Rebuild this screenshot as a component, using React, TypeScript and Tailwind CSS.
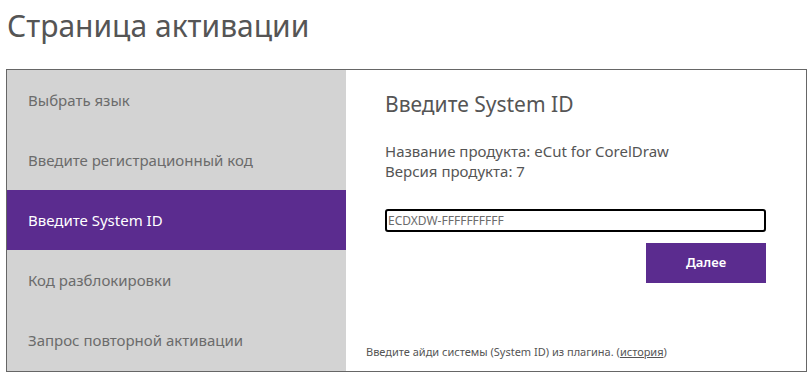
import React from "react";

const items = [
  "Выбрать язык",
  "Введите регистрационный код",
  "Введите System ID",
  "Код разблокировки",
  "Запрос повторной активации",
];

export default function App() {
  return (
    <div
      className="w-[812px] h-[376px] bg-white overflow-hidden"
      style={{ fontFamily: '"Noto Sans", "Open Sans", sans-serif' }}
    >
      <h1 className="pl-[7px] pt-[6px] h-[69px] text-[30px] leading-[40px] text-[#555555] font-normal">
        Страница активации
      </h1>
      <div className="ml-[6px] w-[801px] h-[303px] border border-[#666666] flex">
        <div className="w-[339px] bg-[#d3d3d3] flex flex-col">
          {items.map((t, i) => (
            <div
              key={t}
              className={
                i === 2
                  ? "h-[60px] flex items-center pl-[21px] text-[15px] bg-[#5b2c8f] text-white"
                  : "h-[60px] flex items-center pl-[21px] text-[15px] text-[#6b6b6b]"
              }
            >
              {t}
            </div>
          ))}
        </div>
        <div className="flex-1 flex flex-col pl-[39px] pr-[40px] relative">
          <h2 className="mt-[19px] text-[21px] leading-[30px] text-[#555555] font-normal">
            Введите System ID
          </h2>
          <div className="mt-[22px] text-[15px] leading-[20px] text-[#555555]">
            <div>Название продукта: eCut for CorelDraw</div>
            <div>Версия продукта: 7</div>
          </div>
          <div className="mt-[28px] h-[23px] border-2 border-black rounded-[3px] flex items-center pl-[1px] text-[12px] text-[#6b6b6b]">
            ECDXDW-FFFFFFFFFF
          </div>
          <div className="mt-[11px] flex justify-end">
            <button className="w-[120px] h-[40px] bg-[#5b2c8f] text-white text-[13px] font-semibold">
              Далее
            </button>
          </div>
          <div className="mt-auto mb-[11px] -ml-[19px] text-[11px] text-[#555555]">
            Введите айди системы (System ID) из плагина.{" "}
            (<span className="underline">история</span>)
          </div>
        </div>
      </div>
    </div>
  );
}
